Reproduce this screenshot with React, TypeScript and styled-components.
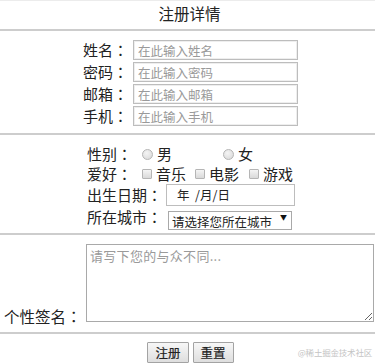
import React from "react";
import styled, { createGlobalStyle } from "styled-components";

const Global = createGlobalStyle`
  html, body { margin: 0; padding: 0; background: #fff; }
  body { font-family: "Noto Sans CJK SC", "Noto Sans", sans-serif; color: #222; }
  * { box-sizing: border-box; }
`;

const Page = styled.div`
  position: relative;
  width: 375px;
  height: 364px;
  overflow: hidden;
  background: #fff;
`;

const TitleBar = styled.div`
  height: 31px;
  border-top: 1px solid #ececec;
  border-bottom: 2px solid #cdcdcd;
  text-align: center;
  font-size: 15.5px;
  line-height: 24px;
  padding-left: 4px;
`;

const Section = styled.div<{ $pt: number; $pb: number; $pl?: number; $noLine?: boolean }>`
  display: flex;
  flex-direction: column;
  padding: ${(p) => p.$pt}px 0 ${(p) => p.$pb}px ${(p) => p.$pl ?? 0}px;
  border-bottom: ${(p) => (p.$noLine ? "none" : "2px solid #cdcdcd")};
`;

const Row = styled.div<{ $h: number; $mt?: number }>`
  display: flex;
  align-items: center;
  height: ${(p) => p.$h}px;
  margin-top: ${(p) => p.$mt ?? 0}px;
`;

const Label = styled.span<{ $w?: number; $right?: boolean }>`
  display: inline-block;
  width: ${(p) => (p.$w ? `${p.$w}px` : "auto")};
  text-align: ${(p) => (p.$right ? "right" : "left")};
  font-size: 15px;
  line-height: 20px;
  white-space: nowrap;
  flex-shrink: 0;
`;

const Colon = styled.span`
  font-family: "Noto Sans CJK JP", "Noto Sans CJK SC", sans-serif;
`;

const TextInput = styled.input`
  width: 165px;
  height: 20px;
  margin-left: 5px;
  border: 1px solid #bdbdbd;
  box-shadow: inset 0 0 0 1px #eeeeee;
  padding: 0 4px;
  font-family: inherit;
  font-size: 12.5px;
  color: #222;
  outline: none;
  &::placeholder { color: #9a9a9a; }
`;

const Radio = styled.span<{ $ml: number }>`
  display: inline-block;
  width: 11px;
  height: 11px;
  border-radius: 50%;
  border: 1px solid #b5b5b5;
  background: radial-gradient(circle at 40% 35%, #f4f4f4, #d6d6d6);
  margin-left: ${(p) => p.$ml}px;
  margin-right: 4px;
  flex-shrink: 0;
`;

const Check = styled.span<{ $ml: number }>`
  display: inline-block;
  width: 10px;
  height: 10px;
  border-radius: 1px;
  border: 1px solid #b5b5b5;
  background: linear-gradient(#f4f4f4, #d9d9d9);
  margin-left: ${(p) => p.$ml}px;
  margin-right: 4px;
  flex-shrink: 0;
`;

const Opt = styled.span`
  font-size: 15px;
  line-height: 20px;
  white-space: nowrap;
`;

const DateBox = styled.div`
  width: 129px;
  height: 22px;
  margin-left: 4px;
  border: 1px solid #bdbdbd;
  font-size: 12.5px;
  line-height: 20px;
  padding-left: 10px;
  white-space: pre;
  color: #222;
`;

const SelectWrap = styled.div`
  position: relative;
  margin-left: 6px;
  width: 124px;
  height: 19px;
`;

const Select = styled.select`
  appearance: none;
  width: 124px;
  height: 19px;
  border: 1px solid #a9a9a9;
  background: #fff;
  font-family: inherit;
  font-size: 12.5px;
  color: #222;
  padding: 0 0 0 3px;
  outline: none;
`;

const Arrow = styled.span`
  position: absolute;
  right: 5px;
  top: 4px;
  font-size: 7px;
  line-height: 10px;
  color: #111;
  pointer-events: none;
`;

const SignRow = styled.div`
  display: flex;
  align-items: flex-end;
  padding-left: 4px;
`;

const SignLabel = styled.span`
  font-size: 15.5px;
  line-height: 20px;
  margin-bottom: -4px;
  width: 82px;
  flex-shrink: 0;
  white-space: nowrap;
`;

const TextArea = styled.textarea`
  width: 288px;
  height: 78px;
  border: 1px solid #a9a9a9;
  padding: 1px 3px;
  font-family: inherit;
  font-size: 13px;
  line-height: 20px;
  letter-spacing: 0.3px;
  outline: none;
  resize: both;
  &::placeholder { color: #9a9a9a; }
`;

const Buttons = styled.div`
  display: flex;
  justify-content: center;
  gap: 4px;
  padding: 8px 0 0 6px;
`;

const Button = styled.button`
  height: 21px;
  padding: 0 7px;
  border: 1px solid #a3a3a3;
  border-radius: 1px;
  background: linear-gradient(#f7f7f7, #dedede);
  font-family: inherit;
  font-size: 12.5px;
  line-height: 19px;
  color: #222;
  -webkit-text-stroke: 0.2px #222;
`;

const Watermark = styled.span`
  position: absolute;
  right: 3px;
  bottom: 6px;
  font-size: 8.5px;
  color: #c4c4c4;
  letter-spacing: -0.2px;
`;

const fields = [
  { label: "姓名", ph: "在此输入姓名" },
  { label: "密码", ph: "在此输入密码" },
  { label: "邮箱", ph: "在此输入邮箱" },
  { label: "手机", ph: "在此输入手机" },
];

export default function App() {
  return (
    <Page>
      <Global />
      <TitleBar>注册详情</TitleBar>
      <Section $pt={9} $pb={7} $pl={83}>
        {fields.map((f, i) => (
          <Row key={f.label} $h={20} $mt={i === 0 ? 0 : 2}>
            <Label $w={45} $right>
              {f.label}
              <Colon>：</Colon>
            </Label>
            <TextInput placeholder={f.ph} />
          </Row>
        ))}
      </Section>
      <Section $pt={9} $pb={6} $pl={87}>
        <Row $h={20}>
          <Label $w={45}>
            性别<Colon>：</Colon>
          </Label>
          <Radio $ml={10} />
          <Opt>男</Opt>
          <Radio $ml={51} />
          <Opt>女</Opt>
        </Row>
        <Row $h={20}>
          <Label $w={45}>
            爱好<Colon>：</Colon>
          </Label>
          <Check $ml={10} />
          <Opt>音乐</Opt>
          <Check $ml={9} />
          <Opt>电影</Opt>
          <Check $ml={10} />
          <Opt>游戏</Opt>
        </Row>
        <Row $h={22}>
          <Label $w={75}>
            出生日期<Colon>：</Colon>
          </Label>
          <DateBox>{"年  /月/日"}</DateBox>
        </Row>
        <Row $h={20} $mt={1}>
          <Label $w={75}>
            所在城市<Colon>：</Colon>
          </Label>
          <SelectWrap>
            <Select defaultValue="">
              <option value="">请选择您所在城市</option>
            </Select>
            <Arrow>▼</Arrow>
          </SelectWrap>
        </Row>
      </Section>
      <Section $pt={9} $pb={10}>
        <SignRow>
          <SignLabel>
            个性签名<Colon>：</Colon>
          </SignLabel>
          <TextArea placeholder="请写下您的与众不同..." />
        </SignRow>
      </Section>
      <Buttons>
        <Button>注册</Button>
        <Button>重置</Button>
      </Buttons>
      <Watermark>@稀土掘金技术社区</Watermark>
    </Page>
  );
}
